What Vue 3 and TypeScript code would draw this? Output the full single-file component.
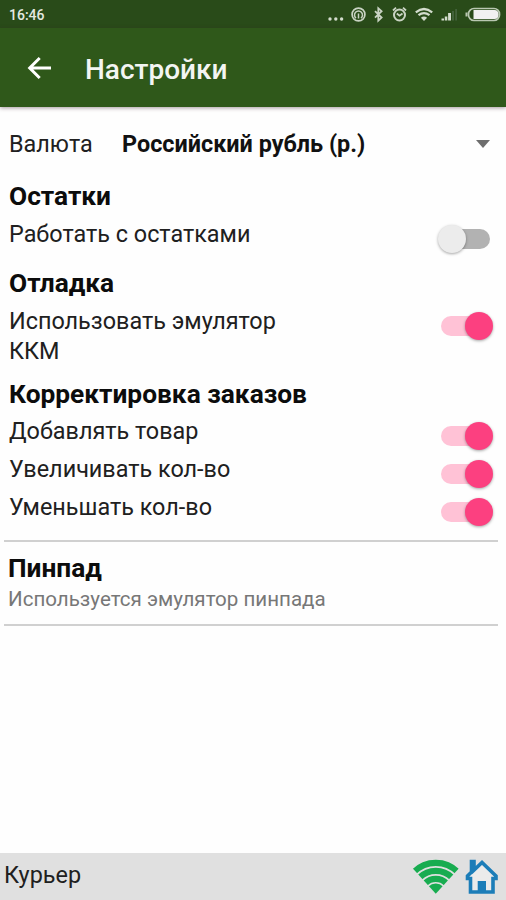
<script setup lang="ts">
import { ref } from 'vue'

interface Option { id: string; label: string; enabled: boolean }
interface Section { title: string; kind: string; options: Option[] }

const sections = ref<Section[]>([
  {
    title: 'Остатки',
    kind: 'stock',
    options: [{ id: 'stock-tracking', label: 'Работать с остатками', enabled: false }],
  },
  {
    title: 'Отладка',
    kind: 'debug',
    options: [{ id: 'emulator', label: 'Использовать эмулятор ККМ', enabled: true }],
  },
  {
    title: 'Корректировка заказов',
    kind: 'orders',
    options: [
      { id: 'add', label: 'Добавлять товар', enabled: true },
      { id: 'increase', label: 'Увеличивать кол-во', enabled: true },
      { id: 'decrease', label: 'Уменьшать кол-во', enabled: true },
    ],
  },
])
</script>

<template>
  <div class="screen">
    <div class="status">
      <span class="time">16:46</span>
      <svg class="status-icons" viewBox="0 0 180 28" width="180" height="28">
        <g fill="#d3dccd">
          <circle cx="4" cy="19" r="1.7" /><circle cx="9.8" cy="19" r="1.7" /><circle cx="15.6" cy="19" r="1.7" />
        </g>
        <g fill="none" stroke="#c9d3c3">
          <circle cx="32.5" cy="14.5" r="6.4" stroke-width="1.7" />
          <path d="M30 18.2a4 4 0 1 1 5 0M32.5 13.5v5" stroke-width="1.5" />
          <path d="M49 11.2l6.6 6.4-3.3 3V8.2l3.3 3-6.6 6.4" stroke-width="1.8" />
          <circle cx="73.5" cy="15" r="5.5" stroke-width="2" />
          <path d="M70.8 13.5l2.7 2.2 3-2.2M67 10.500l3-2.8M80 10.500l-3-2.8" stroke-width="1.8" />
        </g>
        <path d="M89.800 12.300q8.200-6.600 16.400 0M92.500 15.200q5.500-4.300 11 0" fill="none" stroke="#d3dccd" stroke-width="2.200" />
        <path fill="#d3dccd" d="M94.900 17.800q3.100-2.500 6.200 0L98 21zM115.500 20.500v-2h2.500v2zM118.800 20.500v-4h2.500v4zM122.100 20.500v-7.500h2.900v7.500z" />
        <path fill="#42613a" d="M126 20.500V11h2v9.500zM129.200 20.500V9h1.800v11.500z" />
        <rect x="142.500" y="8.500" width="31" height="12" rx="5.500" fill="none" stroke="#b9c7b1" stroke-width="1.700" />
        <path fill="#f1f1f1" d="M147.500 10h21q4 0 4 4.500t-4 4.500h-21z" />
        <path fill="#b9c7b1" d="M139.500 12.500h2v4h-2z" />
      </svg>
    </div>

    <header class="toolbar">
      <svg class="back" viewBox="0 0 26 26" width="26" height="26">
        <path d="M24 13H3M12.700 3L2.700 13l10 10" fill="none" stroke="#fff" stroke-width="3" />
      </svg>
      <h1>Настройки</h1>
    </header>

    <main>
      <div class="currency">
        <span class="currency-label">Валюта</span>
        <span class="currency-value">Российский рубль (р.)</span>
        <svg viewBox="0 0 14 8" width="14" height="8"><path d="M0 0h14L7 8z" fill="#6d6d6d" /></svg>
      </div>

      <section v-for="section in sections" :key="section.kind" :class="section.kind">
        <h2>{{ section.title }}</h2>
        <div v-for="option in section.options" :key="option.id" class="option">
          <span class="option-label">{{ option.label }}</span>
          <button
            type="button"
            class="switch"
            :class="{ on: option.enabled }"
            :aria-label="option.label"
            @click="option.enabled = !option.enabled"
          ><i class="thumb"></i></button>
        </div>
      </section>

      <div class="pinpad">
        <h2>Пинпад</h2>
        <p>Используется эмулятор пинпада</p>
      </div>
    </main>

    <footer>
      <span class="role">Курьер</span>
      <svg viewBox="0 0 90 47" width="90" height="47">
        <defs>
          <clipPath id="signal"><path d="M24.800 40.800L0 13.500V0h49.600v13.500z" /></clipPath>
        </defs>
        <g clip-path="url(#signal)">
          <circle cx="24.800" cy="40.800" r="10.200" fill="#18ac50" />
          <g fill="none" stroke="#18ac50" stroke-width="6.200">
            <circle cx="24.800" cy="40.800" r="15" />
            <circle cx="24.800" cy="40.800" r="23" />
            <circle cx="24.800" cy="40.800" r="31" />
          </g>
        </g>
        <path d="M59.500 25.500V39h22.500V25.500h3V23L71 9.500 63 17V8.500h-2.500V19L56.500 23v2.500z" fill="#ebebeb" stroke="#1c7db8" stroke-width="3.600" />
        <path d="M66.700 28h8.300v12h-8.300z" fill="#1c7db8" />
      </svg>
    </footer>
  </div>
</template>

<style>
body { margin: 0; background: #fff; }
</style>

<style scoped>
.screen {
  display: flex;
  flex-direction: column;
  width: 506px;
  height: 900px;
  overflow: hidden;
  background: #fefefe;
  color: #202020;
  font-family: Roboto, "Noto Sans", sans-serif;
}
h1, h2, p { margin: 0; }
.status {
  display: flex;
  justify-content: space-between;
  flex: none;
  height: 28px;
  padding-left: 9px;
  background: #294b19;
  color: #e4e9e1;
}
.time { font-size: 14px; line-height: 30px; font-weight: 500; }
.toolbar {
  display: flex;
  align-items: center;
  flex: none;
  height: 79px;
  padding-left: 27px;
  background: #2f581a;
  box-shadow: 0 1px 4px rgba(60, 30, 45, .45);
}
.back { margin-top: 1px; }
h1 {
  margin: 5px 0 0 32px;
  color: #f3f5f2;
  font-size: 28px;
  line-height: 34px;
  font-weight: 500;
}
main { flex: 1; padding-top: 22px; }
.currency {
  display: flex;
  align-items: center;
  height: 30px;
  padding: 0 16px 0 9px;
  margin-bottom: 22px;
  font-size: 23.4px;
  line-height: 30px;
}
.currency-label { width: 113px; }
.currency-value { flex: 1; font-weight: 700; color: #111; white-space: nowrap; }
h2 {
  height: 38px;
  font-size: 26.3px;
  line-height: 30px;
  font-weight: 700;
  color: #0c0c0c;
}
section { padding: 0 13px 0 9px; }
.stock { padding-bottom: 11px; }
.debug { padding-bottom: 13px; }
.orders h2 { height: 37px; }
.option {
  display: flex;
  justify-content: space-between;
  align-items: flex-start;
  min-height: 38px;
}
.option-label { width: 320px; font-size: 23.4px; line-height: 30px; }
.switch {
  position: relative;
  display: flex;
  align-items: center;
  width: 55px;
  height: 20px;
  margin: 10px 0 0;
  padding: 0;
  border: 0;
  background: none;
}
.switch::before {
  content: "";
  position: absolute;
  inset: 0 3px;
  border-radius: 10px;
  background: #b2b2b2;
}
.thumb {
  position: relative;
  width: 28px;
  height: 28px;
  border-radius: 50%;
  background: #ececec;
  box-shadow: 0 1px 3px rgba(0, 0, 0, .35);
}
.on { justify-content: flex-end; }
.on::before { background: #ffc2d6; }
.on .thumb { background: #fc4080; }
.pinpad {
  box-sizing: border-box;
  height: 86px;
  margin: 10px 8px 0 4px;
  padding: 11px 4px 0;
  border-top: 2px solid #d0d0d0;
  border-bottom: 2px solid #d0d0d0;
}
.pinpad h2 { height: 33px; }
.pinpad p { font-size: 20.55px; line-height: 26px; color: #777; }
footer {
  display: flex;
  justify-content: space-between;
  flex: none;
  height: 47px;
  padding: 0 5px 0 4px;
  background: #e0e0e0;
}
.role { font-size: 23.4px; line-height: 44px; }
</style>
